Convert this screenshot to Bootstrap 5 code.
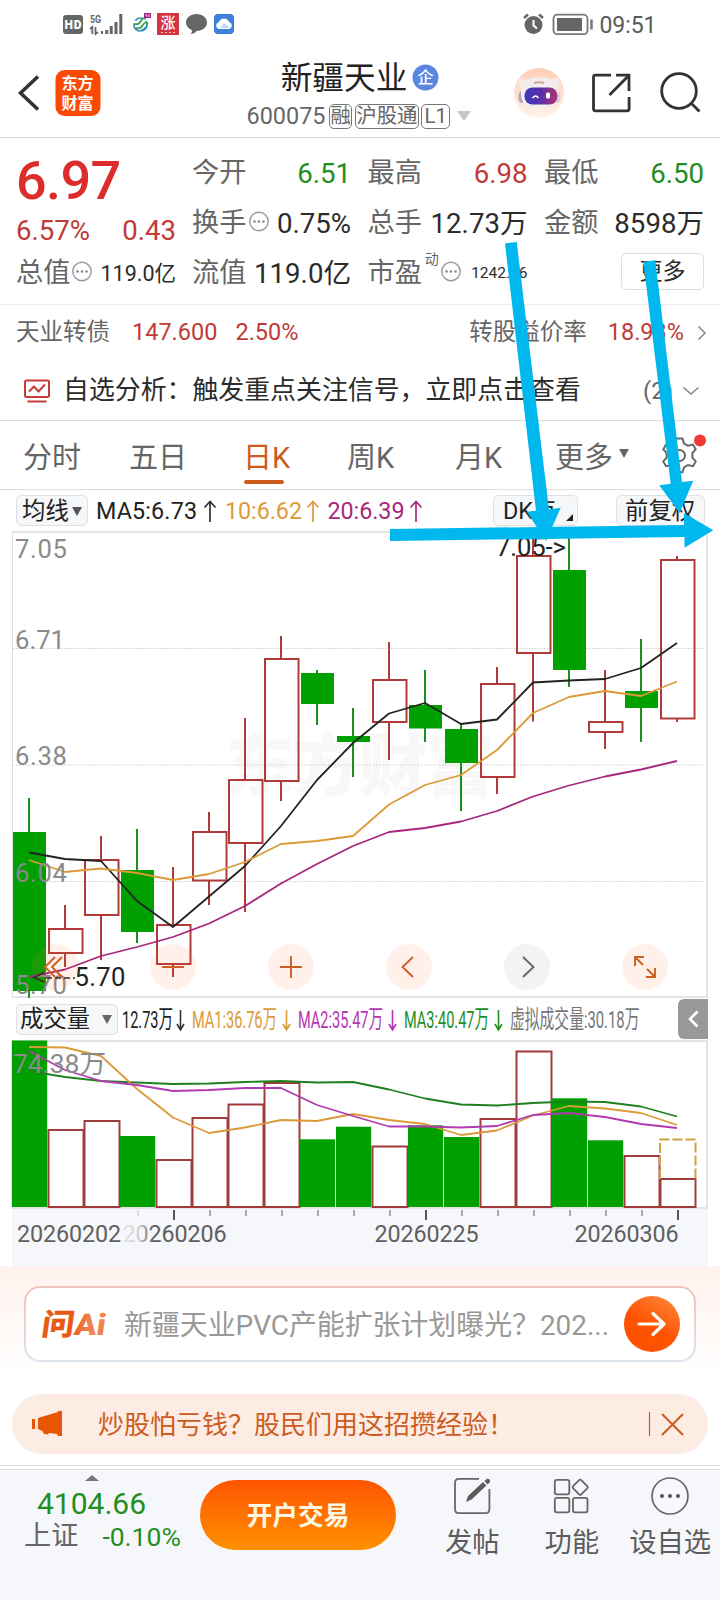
<!DOCTYPE html>
<html lang="zh-CN">
<head>
<meta charset="utf-8">
<meta name="viewport" content="width=device-width, initial-scale=1">
<title>新疆天业 600075</title>
<link href="https://cdn.jsdelivr.net/npm/bootstrap@5.3.0/dist/css/bootstrap.min.css" rel="stylesheet">
<style>
:root{--up:#c03a36;--down:#1f8f1f;--ink:#2b2b2b;--dim:#666;--accent:#cc5c1e;--line:#dcdcdc}
body{width:720px;height:1600px;overflow:hidden;background:#fff;color:var(--ink);font-family:Roboto,"Noto Sans CJK SC",sans-serif;line-height:1;white-space:nowrap}
svg{display:block;flex:none;overflow:visible}
svg text{font-family:Roboto,"Noto Sans CJK SC",sans-serif}
.up{color:var(--up)}.down{color:var(--down)}.dim{color:var(--dim)}
.statusbar{height:48px;padding:0 0 0 60px}
.topbar{height:90px;border-bottom:1.5px solid var(--line)}
.side{width:240px}
.stock-name{font-size:31.7px;line-height:36px;color:#222}
.stock-code{font-size:23.4px;line-height:28px}
.tag{border:1.5px solid #777;border-radius:5px;font-size:20.4px;height:25px;line-height:23px;padding:0 .5px}
.tag+.tag{margin-left:-1px}
.quote{height:167px;padding:11px 16px 0 16px;border-bottom:1px solid #ececec;font-size:27.6px}
.quote-left{width:160px}
.price{font-size:54px;font-weight:500;color:#dd2c2c;line-height:64px;height:60px;letter-spacing:-.6px}
.qcell{height:50px;display:flex;align-items:center;justify-content:space-between}
.qcell .k{color:var(--dim);font-size:27.2px}
.more-btn{width:83px;height:37px;border:1.5px solid #ddd;border-radius:5px;font-size:23px;color:var(--ink);padding:0;line-height:33px;background:#fff;margin-bottom:5px}
.bond{height:54px;padding:1px 13px 0 16px;font-size:23.5px}
.analysis{height:62px;padding:2px 20px 0 23px;font-size:25.9px;border-bottom:1.5px solid var(--line)}
.tabs{height:69px;border-bottom:1.5px solid var(--line);padding:0 17px 0 23px;font-size:29px;color:var(--dim)}
.tabs>div{padding-top:6px}
.tab-on{color:var(--accent);position:relative}
.tab-on::after{content:"";position:absolute;left:1px;bottom:-9px;width:40px;height:4px;border-radius:2px;background:var(--accent)}
.marow{height:41px;padding:0 15px 0 16px;font-size:23.3px}
.chip{border:1.5px solid #dde0e4;background:#f6f7f9;border-radius:5px;height:31px;display:flex;align-items:center;padding:2px 5px 0;font-size:23.4px;color:#222}
.volrow{height:42px;padding:0 12px 0 16px}
.collapse-btn{width:30px;height:40px;border-radius:6px 0 0 6px;background:#999}
.ai-zone{height:128px;padding:20px 24px 0;background:linear-gradient(#fff2ed,#fff 88%)}
.ai-box{height:76px;border:2px solid transparent;border-radius:16px;background:linear-gradient(#fff,#fff) padding-box,linear-gradient(#f0c3bb,#dde4f0) border-box;padding:0 14px;font-size:27.9px;color:#999}
.ai-go{width:56px;height:56px;border-radius:50%;background:linear-gradient(30deg,#ff5200 45%,#ff8a42)}
.tipbar{height:60px;margin:0 12px;border-radius:30px;background:#fcece4;color:var(--accent);font-size:26px;padding:0 23px 0 20px}
.botnav{margin-top:11px;border-top:1.5px solid var(--line);height:135px}
.botin{margin-top:3px;border-top:1.5px solid var(--line);background:#f6f7fa;height:131px}
.idx{width:200px;padding-left:24px}
.open-btn{width:196px;height:70px;border-radius:35px;background:linear-gradient(#ff5500,#ff9000);color:#fff8e4;font-weight:700;font-size:25.7px;line-height:73px;text-align:center;margin-top:10px}
.navitem{font-size:27.3px;color:#5c5c5c;padding-top:7px}
.navitem span{margin-top:11px;line-height:35px}
.annot{position:absolute;left:0;top:0;pointer-events:none}
</style>
</head>
<body class="position-relative">

<div class="statusbar d-flex justify-content-between">
  <svg width="180" height="48" viewBox="60 0 180 48">
    <rect x="63" y="15" width="20" height="19" rx="3" fill="#666"/><text x="64.5" y="29.2" font-size="12" font-weight="900" fill="#fff" textLength="17">HD</text>
    <text x="90" y="23" font-size="11.5" font-weight="700" fill="#666" textLength="11" lengthAdjust="spacingAndGlyphs">5G</text>
    <g fill="none" stroke="#666" stroke-width="1.800"><path d="M90 29l2.300-2v7M95.500 27v7l2.500-2"/></g>
    <path d="M101 31h2v3h-2zM105.200 30h3v4h-3zM109.700 26h3v8h-3zM114.500 22h3v12h-3zM119.300 14h3v20h-3z" fill="#666"/>
    <g fill="none" stroke-width="1.700"><circle cx="140.500" cy="24.500" r="6.500" stroke="#2a8fb5" stroke-dasharray="9 3"/><path d="M134 24q5 1 7-3t5-2M136 28q5 1 7-3t5-1" stroke="#45a04e"/><path d="M138 31q5 0 9-5" stroke="#2a8fb5"/></g>
    <rect x="144" y="13" width="7" height="5" fill="#a7218b"/><path d="M146 14v2h1.500M149 14v3" stroke="#fff" stroke-width=".8" fill="none"/>
    <rect x="157" y="13" width="22" height="22" fill="#d23540"/><text x="160.500" y="28" font-size="15" font-weight="500" fill="#fff">涨</text><path d="M161 32.500h14" stroke="#fbb" stroke-dasharray="2 2"/>
    <path d="M196.500 14c6 0 10.500 3.600 10.500 8.500S202.500 31 196.500 31c-1 2-3.500 3-6 3 1.500-1.200 1.600-2.500 1.300-4-3.500-1.400-5.800-4-5.800-7.500 0-4.900 4.500-8.500 10.500-8.500z" fill="#666"/>
    <rect x="214" y="14" width="20" height="20" rx="4" fill="#3f80dd"/><path d="M219 29a3.600 3.600 0 0 1 0-7 5.300 5.300 0 0 1 10 0 3.600 3.600 0 0 1 0 7z" fill="#fff"/><path d="M220 28l4-5 6 5z" fill="#bcd7fb"/>
  </svg>
  <svg width="200" height="48" viewBox="520 0 200 48">
    <circle cx="533.500" cy="25" r="9" fill="#666"/><path d="M533.500 20v5.500l3.500 3" stroke="#fff" stroke-width="2" fill="none"/><path d="M524 18l4-3.500M543 18l-4-3.500" stroke="#666" stroke-width="2.500"/>
    <rect x="553.500" y="14.700" width="34" height="19.500" rx="4" fill="none" stroke="#777" stroke-width="1.800"/><rect x="557" y="18" width="25" height="13" fill="#666"/><path d="M591.500 19.500v10" stroke="#777" stroke-width="2.500"/>
    <text x="599.500" y="33" font-size="23" fill="#5a5a5a" textLength="57">09:51</text>
  </svg>
</div>

<header class="topbar d-flex">
  <div class="side">
    <svg width="240" height="88" viewBox="0 48 240 88">
      <path d="M38 76.500L20.500 93 38 109.500" fill="none" stroke="#333" stroke-width="3.600"/>
      <rect x="55.500" y="70" width="45" height="46" rx="9" fill="#fb4a04"/>
      <text x="61.500" y="89" font-size="16" font-weight="700" fill="#fff" textLength="32">东方</text><text x="61.500" y="108.500" font-size="16" font-weight="700" fill="#fff" textLength="32">财富</text>
    </svg>
  </div>
  <div class="side d-flex flex-column align-items-center pt-2 mt-1">
    <div class="d-flex align-items-center stock-name" style="height:36px"><span style="padding-top:2px">新疆天业</span>
      <svg style="margin-left:5px" width="27" height="27" viewBox="0 0 27 27"><circle cx="13.500" cy="12.500" r="13" fill="#5b86e0"/><text x="5.500" y="18" font-size="16" font-weight="500" fill="#fff">企</text></svg>
    </div>
    <div class="d-flex align-items-center stock-code dim" style="margin-top:6px;gap:3.500px;padding-right:2px"><span>600075</span>
      <span class="tag">融</span><span class="tag">沪股通</span><span class="tag" style="padding:0 2px">L1</span>
      <svg style="margin-left:4px" width="14" height="10"><path d="M0 0h14L7 10z" fill="#c6c6c6"/></svg>
    </div>
  </div>
  <svg width="240" height="88" viewBox="480 48 240 88">
    <defs><linearGradient id="rb" x1="0" y1="0" x2="0" y2="1"><stop offset="0" stop-color="#ffceb4"/><stop offset="1" stop-color="#fff3ec"/></linearGradient><linearGradient id="visor"><stop offset="0" stop-color="#3f38b8"/><stop offset=".5" stop-color="#5a2fae"/><stop offset="1" stop-color="#b0356e"/></linearGradient></defs>
    <circle cx="539" cy="93" r="25" fill="url(#rb)"/>
    <path d="M519 79q5-2 9 2l-6 9q-5-5-3-11zM559 79q-5-2-8 2l4 9q6-5 4-11z" fill="#f4e9e6"/>
    <ellipse cx="521.500" cy="97" rx="3" ry="6" fill="#aaa6b8"/><ellipse cx="557.500" cy="97" rx="3" ry="6" fill="#d8d0d8"/>
    <rect x="521" y="77.500" width="37" height="31" rx="14" fill="#f1eded"/><path d="M534 83q5-1.500 10 0" stroke="#c9a88c" stroke-width="2" fill="none"/>
    <rect x="524.500" y="87.500" width="33" height="17" rx="8" fill="url(#visor)"/><path d="M532.500 98q3-4 6 0" stroke="#fff" stroke-width="1.500" fill="none"/><rect x="546" y="92.500" width="4" height="6" rx="1.500" fill="#fff"/>
    <g fill="none" stroke="#333" stroke-width="2.800"><path d="M611 75.200h-15.500q-2 0-2 2v31.600q0 2 2 2h31.600q2 0 2-2V97M616 75.200h13V91M629 75.200L609.500 95"/><circle cx="679" cy="91" r="17.300"/><path d="M691.500 103.500l8 8"/></g>
  </svg>
</header>

<svg width="0" height="0" class="position-absolute"><g id="dots"><circle cx="10" cy="11.500" r="9.200" fill="none" stroke="#999" stroke-width="1.400"/><g fill="#888"><circle cx="5.500" cy="11.500" r="1.300"/><circle cx="10" cy="11.500" r="1.300"/><circle cx="14.500" cy="11.500" r="1.300"/></g></g></svg>
<section class="quote d-flex">
  <div class="quote-left">
    <div class="price">6.97</div>
    <div class="d-flex justify-content-between up" style="height:44px;line-height:44px"><span>6.57%</span><span>0.43</span></div>
    <div class="d-flex align-items-center" style="height:42px"><span class="dim" style="font-size:27.2px">总值</span><svg style="margin-left:2px" width="20" height="28" viewBox="0 0 20 28"><use href="#dots"/></svg><span class="ms-auto" style="font-size:21.5px">119.0亿</span></div>
  </div>
  <div class="flex-grow-1 d-flex justify-content-between" style="padding-left:16px">
    <div style="width:159px">
      <div class="qcell"><span class="k">今开</span><span class="down">6.51</span></div>
      <div class="qcell"><span class="k">换手</span><svg width="20" height="28" viewBox="0 0 20 28" style="margin:0 7px 0 1px"><use href="#dots"/></svg><span>0.75%</span></div>
      <div class="qcell"><span class="k">流值</span><span>119.0亿</span></div>
    </div>
    <div style="width:160px">
      <div class="qcell"><span class="k">最高</span><span class="up">6.98</span></div>
      <div class="qcell"><span class="k">总手</span><span>12.73万</span></div>
      <div class="qcell"><span class="k">市盈</span><span class="dim align-self-start" style="font-size:14px;padding-top:3px">动</span><svg width="20" height="28" viewBox="0 0 20 28"><use href="#dots"/></svg><span style="font-size:15.500px;margin-left:7px">1242.86</span></div>
    </div>
    <div style="width:160px">
      <div class="qcell"><span class="k">最低</span><span class="down">6.50</span></div>
      <div class="qcell"><span class="k">金额</span><span>8598万</span></div>
      <div class="qcell justify-content-end"><button class="more-btn">更多</button></div>
    </div>
  </div>
</section>

<div class="bond d-flex align-items-center">
  <span class="dim">天业转债</span><span class="up" style="margin-left:22px">147.600</span><span class="up" style="margin-left:18px">2.50%</span>
  <span class="dim ms-auto">转股溢价率</span><span class="up" style="margin-left:21px">18.93%</span>
  <svg style="margin-left:13px" width="10" height="16"><path d="M1.500 1.500L8 8l-6.500 6.500" fill="none" stroke="#888" stroke-width="1.500"/></svg>
</div>
<div class="analysis d-flex align-items-center">
  <svg width="28" height="24" viewBox="0 0 28 24"><g fill="none" stroke="#c53d3a" stroke-width="2"><rect x="2" y="1.500" width="24" height="16.500" rx="1.500"/><path d="M6 12.500l5-5 4.500 5 6.500-7M4.500 22.500h19"/></g></svg>
  <span style="margin-left:12px">自选分析：触发重点关注信号，立即点击查看</span>
  <span class="dim ms-auto" style="font-size:24px">(2)</span>
  <svg style="margin-left:9px" width="18" height="10"><path d="M1.500 1.500L9 8l7.500-6.500" fill="none" stroke="#888" stroke-width="1.600"/></svg>
</div>

<nav class="tabs d-flex align-items-center">
  <div style="width:106px">分时</div><div style="width:114px">五日</div><div style="width:104px"><span class="tab-on">日K</span></div><div style="width:108px">周K</div><div style="width:100px">月K</div><div>更多</div>
  <svg style="margin:0 0 3px 6px" width="10" height="9"><path d="M0 0h10L5 9z" fill="#666"/></svg>
  <svg class="ms-auto" width="44" height="60" viewBox="659 425 44 60"><path d="M676.500 438.500h6l1.500 5 4 2.300 5-1.200 2.700 4.800-3.300 3.700v4.600l3.300 3.700-2.700 4.800-5-1.200-4 2.300-1.500 5h-6l-1.500-5-4-2.300-5 1.200-2.700-4.800 3.300-3.700v-4.600l-3.300-3.700 2.700-4.800 5 1.200 4-2.300z" fill="none" stroke="#666" stroke-width="2"/><circle cx="679.500" cy="455.500" r="5.500" fill="none" stroke="#666" stroke-width="2"/><circle cx="700" cy="440.500" r="6" fill="#f03a34"/></svg>
</nav>

<div class="marow d-flex align-items-center">
  <span class="chip" style="width:72px">均线<svg style="margin-left:3px" width="10" height="9"><path d="M0 0h10L5 9z" fill="#555"/></svg></span>
  <svg width="330" height="40" viewBox="88 490 330 40" font-size="23.300">
    <text x="96" y="518" fill="#222" textLength="101">MA5:6.73</text><text x="225" y="518" fill="#dc9a38" textLength="77">10:6.62</text><text x="327.500" y="518" fill="#a8277c" textLength="77">20:6.39</text>
    <g fill="none" stroke-width="1.700"><path d="M210 521v-20M204.500 506.500l5.500-6 5.500 6" stroke="#333"/><path d="M313 521v-20M307.500 506.500l5.500-6 5.500 6" stroke="#dc9a38"/><path d="M416 521v-20M410.500 506.500l5.500-6 5.500 6" stroke="#a8277c"/></g>
  </svg>
  <span class="chip ms-auto position-relative" style="width:85px;padding-left:9px">DK点<svg class="position-absolute end-0 bottom-0 me-1 mb-1" width="7" height="7"><path d="M7 0v7H0z" fill="#222"/></svg></span>
  <span class="chip" style="width:89px;margin-left:38px;padding-left:8px">前复权</span>
</div>

<svg id="kchart" width="720" height="467" viewBox="0 531 720 467">
  <text x="226" y="790" font-size="68" font-weight="900" fill="#f8f8f8" textLength="268">东方财富</text>
  <g stroke="#cfcfcf" stroke-dasharray="1.500 1.500"><path d="M13 648.500h694M13 765h694M13 881.500h694"/></g>
  <path d="M12.500 531v466" stroke="#e0e0e0"/><path d="M12 532h695v465H12" fill="none" stroke="#e4e4e4" stroke-width="2"/>
  <g id="candles"></g>
  <g fill="none" stroke-width="1.800" stroke-linejoin="round" id="kma"></g>
  <g fill="#8a8a8a" font-size="25.600"><text x="15" y="558" textLength="52">7.05</text><text x="15" y="649" textLength="50">6.71</text><text x="15" y="765" textLength="52">6.38</text><text x="15" y="882" textLength="52">6.04</text><text x="15" y="994" textLength="52">5.70</text></g>
  <g fill="#222" font-size="25.600"><text x="496" y="556" textLength="70">7.05-&gt;</text><text x="74.500" y="986" textLength="51">5.70</text></g>
  <path d="M44 972.500L34 977.500l10 4.500" fill="none" stroke="#222" stroke-width="1.600"/><path d="M46 978h29" stroke="#222" stroke-width="1.600" stroke-dasharray="6 3"/>
  <g fill="#ff7a35" fill-opacity=".11"><circle cx="55" cy="967" r="23"/><circle cx="173" cy="967" r="23"/><circle cx="291" cy="967" r="23"/><circle cx="409" cy="967" r="23"/><circle cx="645" cy="967" r="23"/></g>
  <circle cx="527" cy="967" r="23" fill="#f3f3f3"/>
  <g fill="none" stroke="#cf5f24" stroke-width="1.900"><path d="M55 957l-10 10 10 10M62 957l-10 10 10 10M162 967h22M280 967h22M291 956v22M413 957l-10.500 10 10.500 10M635 966v-9h9M635 957l8 8M655 968v9h-9M655 977l-8-8"/></g>
  <path d="M523 957l10.500 10-10.500 10" fill="none" stroke="#666" stroke-width="1.900"/>
</svg>

<div class="volrow d-flex align-items-center">
  <span class="chip" style="padding:1px 5px 0 3px;width:102px">成交量<svg class="ms-auto" width="10" height="9"><path d="M0 0h10L5 9z" fill="#666"/></svg></span>
  <svg width="530" height="40" viewBox="118 999 530 40" font-size="24.500">
    <text transform="translate(122 1028) scale(.594 1)" fill="#222">12.73万</text><text transform="translate(192 1028) scale(.594 1)" fill="#dc9a38">MA1:36.76万</text><text transform="translate(298 1028) scale(.594 1)" fill="#b436b4">MA2:35.47万</text><text transform="translate(404 1028) scale(.594 1)" fill="#1f8f1f">MA3:40.47万</text><text transform="translate(510 1028) scale(.604 1)" fill="#777">虚拟成交量:30.18万</text>
    <g fill="none" stroke-width="1.600"><path d="M180.500 1010v20M177 1024l3.500 6 3.500-6" stroke="#333"/><path d="M286.500 1010v20M283 1024l3.500 6 3.500-6" stroke="#dc9a38"/><path d="M392.500 1010v20M389 1024l3.500 6 3.500-6" stroke="#b436b4"/><path d="M498.500 1010v20M495 1024l3.500 6 3.500-6" stroke="#1f8f1f"/></g>
  </svg>
  <div class="collapse-btn ms-auto d-flex align-items-center justify-content-center"><svg width="12" height="18"><path d="M10.500 1.500L3 9l7.500 7.500" fill="none" stroke="#fff" stroke-width="2.600"/></svg></div>
</div>

<svg id="vchart" width="720" height="226" viewBox="0 1040 720 226">
  <path d="M12 1041h695v167H12z" fill="none" stroke="#e4e4e4" stroke-width="2"/>
  <rect x="12" y="1209" width="696" height="57" fill="#f6f7fa"/>
  <g id="bars"></g>
  <path d="M660 1179v-39.500h35.500V1179" fill="none" stroke="#cfa044" stroke-width="2" stroke-dasharray="10 3"/>
  <g fill="none" stroke-width="1.800" stroke-linejoin="round" id="vma"></g>
  <text x="13" y="1073" font-size="26.600" fill="#8a8a8a" textLength="93">74.38万</text>
  <g id="ticks"></g>
  <g font-size="23.300" fill="#5f5f5f"><text x="17" y="1242" textLength="104">20260202</text><text x="122.500" y="1242" textLength="104" fill="url(#fade)">20260206</text><text x="374.500" y="1242" textLength="104">20260225</text><text x="574.500" y="1242" textLength="104">20260306</text></g>
  <defs><linearGradient id="fade"><stop offset="0" stop-color="#e6e6e6"/><stop offset=".16" stop-color="#ccc"/><stop offset=".3" stop-color="#5f5f5f"/></linearGradient></defs>
</svg>

<section class="ai-zone">
  <div class="ai-box d-flex align-items-center">
    <svg width="68" height="34" viewBox="38 1308 68 34">
      <defs><linearGradient id="lg"><stop offset=".45" stop-color="#e85a17"/><stop offset=".75" stop-color="#f08350"/></linearGradient></defs>
      <text transform="translate(38.500 1335.500) skewX(-8) scale(1.090 1)" font-size="30" font-weight="900" fill="url(#lg)">问Ai</text>
    </svg>
    <span style="margin-left:16px;padding-top:3px">新疆天业PVC产能扩张计划曝光？202...</span>
    <div class="ai-go ms-auto d-flex align-items-center justify-content-center"><svg width="30" height="26"><path d="M2 13h25M16 2.500L27 13 16 23.500" fill="none" stroke="#fff" stroke-width="3.200" stroke-linecap="round" stroke-linejoin="round"/></svg></div>
  </div>
</section>

<div class="tipbar d-flex align-items-center">
  <svg width="32" height="28" viewBox="0 0 32 28"><path d="M0 9h3v10H0zM6 8l20-6V1h4v25h-4l-1-2-8-1-1 1.500-4-.5-1.500-3L6 19z" fill="#ea5504"/></svg>
  <span style="margin-left:34px;padding-top:2px">炒股怕亏钱？股民们用这招攒经验！</span>
  <svg class="ms-auto" width="38" height="26"><path d="M2.500 1v24" stroke="#cc5c1e" stroke-width="1.200"/><path d="M15 3l21 21M36 3L15 24" stroke="#cc5c1e" stroke-width="2"/></svg>
</div>

<footer class="botnav"><div class="botin d-flex">
  <div class="idx down">
    <svg width="14" height="6" style="margin:5px 0 0 61px"><path d="M0 6l7-6 7 6z" fill="#777"/></svg>
    <div style="font-size:30px;line-height:34px;padding-left:13px;margin-top:6px">4104.66</div>
    <div class="d-flex align-items-center" style="font-size:26.500px;height:32px"><span class="dim" style="font-size:27.200px">上证</span><span style="margin-left:24px">-0.10%</span></div>
  </div>
  <div class="open-btn">开户交易</div>
  <div class="navitem d-flex flex-column align-items-center" style="margin-left:49px">
    <svg width="38" height="38" viewBox="454 1477 38 38"><path d="M480 1478.800h-20q-4 0-4 4v26.400q0 4 4 4h26.400q4 0 4-4V1489" fill="none" stroke="#666" stroke-width="1.800"/><path d="M467 1502l2-6 15-14 3.500 3.500-15 14zM485.500 1481l3-2.500q3 .5 2.500 3.500l-2.500 2.500z" fill="#5c5c5c"/></svg><span>发帖</span></div>
  <div class="navitem d-flex flex-column align-items-center" style="margin-left:45px">
    <svg width="38" height="38" viewBox="553 1477 38 38"><g fill="none" stroke="#666" stroke-width="1.800"><rect x="554.800" y="1479.800" width="14.500" height="14.500" rx="2"/><rect x="554.800" y="1497.800" width="14.500" height="14.500" rx="2"/><rect x="573" y="1497.800" width="14.500" height="14.500" rx="2"/><rect x="574.500" y="1481.500" width="11.500" height="11.500" rx="1.500" transform="rotate(45 580.200 1487.200)"/></g></svg><span>功能</span></div>
  <div class="navitem d-flex flex-column align-items-center" style="margin-left:30px">
    <svg width="38" height="38"><circle cx="19" cy="19" r="18" fill="none" stroke="#666" stroke-width="1.700"/><g fill="#555"><circle cx="11" cy="19" r="2"/><circle cx="19" cy="19" r="2"/><circle cx="27" cy="19" r="2"/></g></svg><span>设自选</span></div>
</div></footer>

<svg class="annot" width="720" height="600"><g fill="#00b7ee"><path d="M505 243.500l11.700-1.500L549 509.500l11.700-1.800L546 541 526.700 511.700l9.300-1z"/><path d="M643.300 261.700l12-1.500L682 482l11.300-1.300L679.500 513l-20.200-27.700 11.400-1.500z"/><path d="M390 529l294-4v-12l29.300 17.300L684.500 547.700V537L390 541z"/></g></svg>

<script>
// Candle rows: up?, high, top, bottom, low
const candles=[[0,798,832,991,998],[1,905,929,953,967],[1,836,860,915,960],[0,829,870,932,943],[1,867,925,964,977],[1,812,832,880.5,905],[1,718,780,843,912],[1,636,659,781,801],[0,670,673,704,725],[0,708,736,742,777],[1,642,680,722,760],[0,670,705,728.5,742],[0,724,729,763,811],[1,667,684,777,794],[1,535,556,653,721.5],[0,535,570,670,687],[1,670,722,732,749],[0,639,691,708,742],[1,556,560,718.5,722]];
document.getElementById('candles').innerHTML=candles.map(([u,h,t,b,l],i)=>{const x=29+36*i;
 return u?`<path d="M${x} ${h}V${t}M${x} ${b}V${l}" stroke="#b03a38" stroke-width="2"/><rect x="${x-16}" y="${t}" width="33.500" height="${b-t}" fill="none" stroke="#b03a38" stroke-width="2"/>`
 :`<path d="M${x} ${h}V${l}" stroke="#1b8f1b" stroke-width="2"/><rect x="${x-16}" y="${t}" width="33" height="${b-t}" fill="#00a000"/>`}).join('');
const line=(ys,c)=>`<polyline points="${ys.map((y,i)=>(29+36*i)+','+y).join(' ')}" stroke="${c}"/>`;
document.getElementById('kma').innerHTML=
 line([852.5,859,861,901,927,896.5,866,826,780,743,713.5,703,724,719.5,682.5,680.5,679,668,643],'#222')+
 line([860,872,868.5,873,880,874,862,844,841,836,804.5,785,775,750,713,697,691,696,681.5],'#dc9a38')+
 line([977,969.5,956,947,937,923.5,906,883.5,864,846,832,828,821.5,811,796.5,785.5,776.5,769.5,761],'#a8277c');
// Volume rows: up?, top
const vols=[[0,1040.5],[1,1130],[1,1121],[0,1136],[1,1160],[1,1118],[1,1104.5],[1,1083],[0,1139.3],[0,1126.7],[1,1146.5],[0,1125.3],[0,1137],[1,1119],[1,1051.5],[0,1098.3],[0,1140.3],[1,1156],[1,1179]];
document.getElementById('bars').innerHTML=vols.map(([u,y],i)=>{const x=12+36*i;
 return u?`<rect x="${x+.5}" y="${y}" width="35" height="${1207-y}" fill="none" stroke="#a03c3c" stroke-width="2"/>`
 :`<rect x="${x}" y="${y}" width="35.200" height="${1207-y}" fill="#00a000"/>`}).join('');
document.getElementById('vma').innerHTML=
 line([1071,1077,1081,1082.5,1084,1083.5,1082,1081,1082.5,1082,1089.5,1098.5,1104.5,1105.5,1103,1101.5,1102,1106.5,1116.5],'#1f801f')+
 line([1047,1047.5,1056,1089,1117.5,1133,1127.5,1120,1121,1114,1120,1124,1135,1130.5,1115.5,1106,1108.5,1113,1125],'#dc9a38')+
 line([1051,1070,1081,1085,1091,1090,1088,1088,1105,1116,1126.5,1126.5,1127.5,1126,1115,1113,1117,1124,1128],'#b03ab0');
let t='';for(let i=3;i<19;i++){const m=[4,11,18].includes(i),x=30+36*i;t+=`<path d="M${x} 1210v${m?10:6}" stroke="${m?'#555':i==3?'#ddd':'#aaa'}" stroke-width="2"/>`}
document.getElementById('ticks').innerHTML=t;
</script>
<script src="https://cdn.jsdelivr.net/npm/bootstrap@5.3.0/dist/js/bootstrap.bundle.min.js"></script>
</body>
</html>
